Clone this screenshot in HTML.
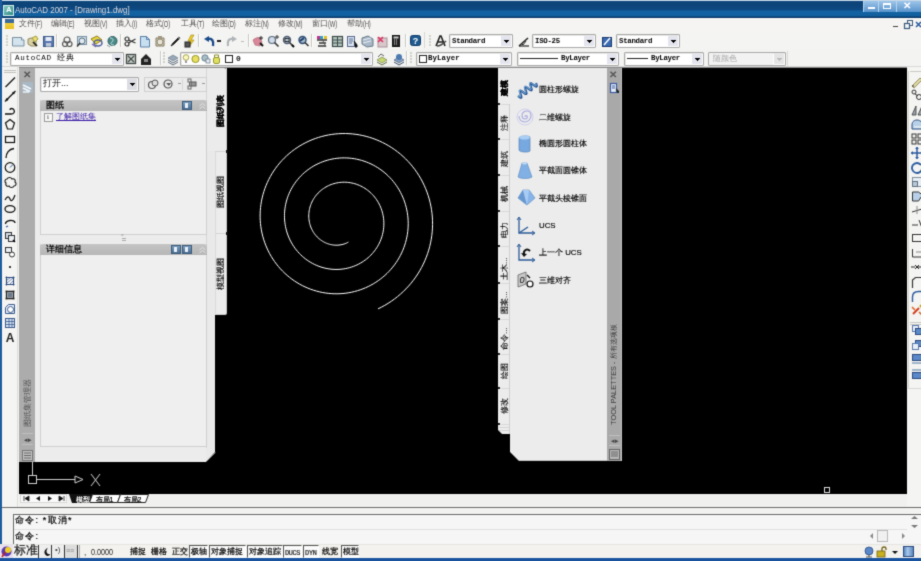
<!DOCTYPE html>
<html><head><meta charset="utf-8"><title>AutoCAD 2007</title><style>
*{margin:0;padding:0;box-sizing:border-box}
html,body{width:921px;height:561px;overflow:hidden;background:#f2f2f0;font-family:"Liberation Sans",sans-serif;position:relative}
.a{position:absolute}
.t{white-space:nowrap;line-height:1}
.m{font-family:"Liberation Mono",monospace}
.s{font-family:"Liberation Serif",serif}
svg{position:absolute;overflow:visible}
</style></head><body><div id="root" style="position:absolute;left:0;top:0;width:921px;height:561px;overflow:hidden;filter:url(#bl)"><svg width="0" height="0" style="position:absolute"><filter id="bl" x="0" y="0" width="100%" height="100%" color-interpolation-filters="sRGB"><feConvolveMatrix order="3" kernelMatrix="1 5.0 1 5.0 25.0 5.0 1 5.0 1" divisor="49.0" edgeMode="duplicate" preserveAlpha="true"/></filter></svg>
<div class="a" style="left:0px;top:0px;width:921px;height:18px;background:linear-gradient(#c8d8e8 0,#c8d8e8 1px,#0e477c 1px,#0c4478 5px,#0e4a84 10px,#1262a2 11px,#1260a0 16px,#0a3868 17px,#0a3868 18px)"></div>
<div class="a" style="left:0px;top:18px;width:921px;height:1px;background:#e0ebf4"></div>
<div class="a" style="left:3px;top:5px;width:11px;height:11px;background:linear-gradient(135deg,#7fc8c0,#2f8c86);border:1px solid #d8f0ec"></div>
<div class="a t" style="left:6px;top:6px;font-size:8px;color:#fff;font-weight:bold">A</div>
<div class="a t" style="left:15px;top:5px;font-size:9.5px;color:#d8e0ea;transform:scaleX(0.835);transform-origin:0 0;text-shadow:0 0 1px #0a2a55">AutoCAD 2007 - [Drawing1.dwg]</div>
<div class="a" style="left:863px;top:1px;width:15px;height:11px;background:linear-gradient(#9cc4e8,#5a94cc);border-left:1px solid #b8d4ec"></div>
<div class="a" style="left:878px;top:1px;width:18px;height:11px;background:linear-gradient(#9cc4e8,#5a94cc);border-left:1px solid #b8d4ec"></div>
<div class="a" style="left:896px;top:1px;width:25px;height:11px;background:linear-gradient(#9cc4e8,#5a94cc);border-left:1px solid #b8d4ec"></div>
<div class="a" style="left:868px;top:7px;width:7px;height:2px;background:#fff"></div>
<div class="a" style="left:883px;top:3px;width:8px;height:6px;border:1px solid #fff;border-top-width:2px"></div>
<div class="a t" style="left:903px;top:1px;font-size:10px;color:#fff;font-weight:bold">✕</div>
<div class="a" style="left:0px;top:0px;width:2px;height:544px;background:#1d5c9e"></div>
<div class="a" style="left:2px;top:18px;width:919px;height:14px;background:#f5f4f2"></div>
<div class="a" style="left:5px;top:19px;width:9px;height:10px;background:linear-gradient(#3a6a9a 0,#3a6a9a 40%,#f0d040 40%,#e8c020 100%)"></div>
<div class="a t" style="left:19px;top:20px;font-size:8px;color:#505050">文件<span style="font-size:9.5px;letter-spacing:-0.3px;display:inline-block;transform:scaleX(0.62);transform-origin:0 0;vertical-align:top;margin-top:-1px">(F)</span></div>
<div class="a t" style="left:51px;top:20px;font-size:8px;color:#505050">编辑<span style="font-size:9.5px;letter-spacing:-0.3px;display:inline-block;transform:scaleX(0.62);transform-origin:0 0;vertical-align:top;margin-top:-1px">(E)</span></div>
<div class="a t" style="left:84px;top:20px;font-size:8px;color:#505050">视图<span style="font-size:9.5px;letter-spacing:-0.3px;display:inline-block;transform:scaleX(0.62);transform-origin:0 0;vertical-align:top;margin-top:-1px">(V)</span></div>
<div class="a t" style="left:116px;top:20px;font-size:8px;color:#505050">插入<span style="font-size:9.5px;letter-spacing:-0.3px;display:inline-block;transform:scaleX(0.62);transform-origin:0 0;vertical-align:top;margin-top:-1px">(I)</span></div>
<div class="a t" style="left:146px;top:20px;font-size:8px;color:#505050">格式<span style="font-size:9.5px;letter-spacing:-0.3px;display:inline-block;transform:scaleX(0.62);transform-origin:0 0;vertical-align:top;margin-top:-1px">(O)</span></div>
<div class="a t" style="left:181px;top:20px;font-size:8px;color:#505050">工具<span style="font-size:9.5px;letter-spacing:-0.3px;display:inline-block;transform:scaleX(0.62);transform-origin:0 0;vertical-align:top;margin-top:-1px">(T)</span></div>
<div class="a t" style="left:212px;top:20px;font-size:8px;color:#505050">绘图<span style="font-size:9.5px;letter-spacing:-0.3px;display:inline-block;transform:scaleX(0.62);transform-origin:0 0;vertical-align:top;margin-top:-1px">(D)</span></div>
<div class="a t" style="left:245px;top:20px;font-size:8px;color:#505050">标注<span style="font-size:9.5px;letter-spacing:-0.3px;display:inline-block;transform:scaleX(0.62);transform-origin:0 0;vertical-align:top;margin-top:-1px">(N)</span></div>
<div class="a t" style="left:278px;top:20px;font-size:8px;color:#505050">修改<span style="font-size:9.5px;letter-spacing:-0.3px;display:inline-block;transform:scaleX(0.62);transform-origin:0 0;vertical-align:top;margin-top:-1px">(M)</span></div>
<div class="a t" style="left:312px;top:20px;font-size:8px;color:#505050">窗口<span style="font-size:9.5px;letter-spacing:-0.3px;display:inline-block;transform:scaleX(0.62);transform-origin:0 0;vertical-align:top;margin-top:-1px">(W)</span></div>
<div class="a t" style="left:347px;top:20px;font-size:8px;color:#505050">帮助<span style="font-size:9.5px;letter-spacing:-0.3px;display:inline-block;transform:scaleX(0.62);transform-origin:0 0;vertical-align:top;margin-top:-1px">(H)</span></div>
<div class="a" style="left:893px;top:26px;width:5px;height:1px;background:#444"></div>
<svg style="left:904px;top:20px;" width="9" height="9" viewBox="0 0 9 9"><rect x="3.5" y=".5" width="5" height="5" fill="none" stroke="#3a5a80"/><rect x=".5" y="3.5" width="5" height="5" fill="#f4f4f2" stroke="#3a5a80" stroke-width="1.2"/></svg>
<svg style="left:915px;top:21px;" width="7" height="7" viewBox="0 0 7 7"><path d="M1 1l5 5M6 1l-5 5" stroke="#2a5aa0" stroke-width="1.5"/></svg>
<div class="a" style="left:2px;top:32px;width:919px;height:17px;background:#f4f4f2"></div>
<div class="a" style="left:2px;top:49px;width:919px;height:19px;background:#f3f3f1"></div>
<div class="a" style="left:2px;top:66px;width:919px;height:1px;background:#d8d8d6"></div>
<div class="a" style="left:19px;top:67px;width:888px;height:1px;background:#8a8a8a"></div>
<svg style="left:12px;top:35px;" width="12" height="12" viewBox="0 0 12 12"><path d="M0.5 2.5h9l2.5 2.5v6h-11.5z" fill="#d4e4ee" stroke="#7890a0"/><path d="M9.5 2.5v2.5h2.5" fill="#fff" stroke="#7890a0"/></svg>
<svg style="left:27px;top:35px;" width="12" height="12" viewBox="0 0 12 12"><path d="M1 4l3-1 5 1v7h-5l-3-2z" fill="#d8d0a0" stroke="#908860"/><path d="M5 3l4-2 2 3-3 3z" fill="#e8e070" stroke="#a09840"/><path d="M6 7l4 4" stroke="#111" stroke-width="1.6"/></svg>
<svg style="left:42px;top:35px;" width="12" height="12" viewBox="0 0 12 12"><rect x="1.5" y="1.5" width="10" height="10" fill="#5878b0" stroke="#3a5888"/><rect x="3.5" y="2" width="6" height="4" fill="#e8ecf4"/><rect x="4" y="8" width="5" height="3.5" fill="#c0c8d8"/></svg>
<svg style="left:61px;top:35px;" width="12" height="12" viewBox="0 0 12 12"><circle cx="6" cy="5" r="3" fill="none" stroke="#555" stroke-width="1.2"/><circle cx="4" cy="9" r="2.5" fill="none" stroke="#555" stroke-width="1.2"/><circle cx="8.5" cy="9" r="2.5" fill="none" stroke="#555" stroke-width="1.2"/></svg>
<svg style="left:76px;top:35px;" width="12" height="12" viewBox="0 0 12 12"><rect x="1.5" y="1.5" width="9" height="8" fill="#c8dce8" stroke="#7890a0"/><circle cx="6" cy="6" r="3" fill="#dfeaf2" stroke="#607080"/><path d="M4 8l-3 3.5" stroke="#333" stroke-width="1.5"/></svg>
<svg style="left:90px;top:35px;" width="12" height="12" viewBox="0 0 12 12"><path d="M1 4l6-3 5 4-6 4z" fill="#e8d838" stroke="#907820"/><ellipse cx="8" cy="8" rx="4" ry="3" fill="none" stroke="#5060a0" stroke-width="1.5"/><path d="M2 9l4 3" stroke="#8070b0" stroke-width="1.5"/></svg>
<svg style="left:106px;top:35px;" width="12" height="12" viewBox="0 0 12 12"><circle cx="6.5" cy="6" r="4.5" fill="#4a8a88" stroke="#2a5a60"/><path d="M4 3c3 0 4 2 2 4s-1 3 2 3" stroke="#c8e8e0" fill="none"/><path d="M1 10l3 2" stroke="#8898a8"/></svg>
<svg style="left:124px;top:35px;" width="12" height="12" viewBox="0 0 12 12"><circle cx="3" cy="4" r="2" fill="none" stroke="#333" stroke-width="1.2"/><circle cx="3" cy="9" r="2" fill="none" stroke="#333" stroke-width="1.2"/><path d="M4.5 5l7 3M4.5 8l7-4" stroke="#333" stroke-width="1.2"/></svg>
<svg style="left:139px;top:35px;" width="12" height="12" viewBox="0 0 12 12"><path d="M1.5 1.5h6l3 3v7.5h-9z" fill="#c8dff0" stroke="#5a80a8"/><path d="M1.5 1.5h6v3h3" fill="none" stroke="#5a80a8"/></svg>
<svg style="left:154px;top:35px;" width="12" height="12" viewBox="0 0 12 12"><path d="M2 3h8v8h-8z" fill="#d8d0b8" stroke="#807860" rx="2"/><circle cx="6" cy="7" r="3" fill="#e8e4d8" stroke="#908870"/><rect x="4" y="1" width="4" height="3" fill="#a09880"/></svg>
<svg style="left:169px;top:35px;" width="12" height="12" viewBox="0 0 12 12"><path d="M2 11l2-3 6-6 1 1-6 6z" fill="#222" stroke="#222"/><path d="M9 2l2 2" stroke="#888" stroke-width="1.5"/></svg>
<svg style="left:184px;top:35px;" width="12" height="12" viewBox="0 0 12 12"><path d="M7 0l-3 6h3l-2 6 5-7h-3l3-5z" fill="#f0d020" stroke="#a08010" stroke-width=".6"/><rect x="1" y="7" width="5" height="5" fill="#555" stroke="#222"/></svg>
<svg style="left:203px;top:35px;" width="12" height="12" viewBox="0 0 12 12"><path d="M10 11c1-5-1-8-5-7" fill="none" stroke="#1a4a8a" stroke-width="2.4"/><path d="M1 4l5-3v6z" fill="#1a4a8a"/></svg>
<svg style="left:226px;top:35px;" width="12" height="12" viewBox="0 0 12 12"><path d="M2 11c-1-5 1-8 5-7" fill="none" stroke="#b0b4b8" stroke-width="2.2"/><path d="M11 4l-5-3v6z" fill="#b0b4b8"/></svg>
<svg style="left:252px;top:35px;" width="12" height="12" viewBox="0 0 12 12"><path d="M1 5c2-2 5-3 7-2l2 4-2 4-5-1z" fill="#d88898" stroke="#a86070" stroke-width=".6"/><path d="M8 8l3 3" stroke="#111" stroke-width="2"/><path d="M9 1v4M7 3h4" stroke="#222"/></svg>
<svg style="left:267px;top:35px;" width="12" height="12" viewBox="0 0 12 12"><circle cx="5" cy="5" r="3.5" fill="#d0dce8" stroke="#5a6a80" stroke-width="1.2"/><path d="M7.5 7.5l4 4" stroke="#333" stroke-width="1.6"/><path d="M10 0v4M8 2h4" stroke="#333"/></svg>
<svg style="left:282px;top:35px;" width="12" height="12" viewBox="0 0 12 12"><circle cx="5" cy="5" r="3.5" fill="#b8c8d8" stroke="#4a5a70" stroke-width="1.4"/><rect x="3" y="3.5" width="4" height="3" fill="none" stroke="#333"/><path d="M7.5 7.5l3 3" stroke="#333" stroke-width="1.6"/><path d="M10 10l2 2" stroke="#000" stroke-width="2"/></svg>
<svg style="left:297px;top:35px;" width="12" height="12" viewBox="0 0 12 12"><circle cx="5.5" cy="5" r="3.5" fill="#a8bccc" stroke="#2a4a70" stroke-width="1.4"/><path d="M3 6l4-3" stroke="#1a3a6a" stroke-width="2"/><path d="M8 7.5l3.5 3.5" stroke="#333" stroke-width="1.6"/></svg>
<svg style="left:316px;top:35px;" width="12" height="12" viewBox="0 0 12 12"><rect x="1" y="1" width="3" height="3" fill="#c03090"/><rect x="4" y="1" width="3" height="3" fill="#30a0c0"/><rect x="8" y="1" width="3" height="3" fill="#e0c020"/><path d="M1 5h10M3 8h7M2 11h8" stroke="#333" stroke-width="1.5"/><path d="M6 4l4 8" stroke="#555"/></svg>
<svg style="left:331px;top:35px;" width="12" height="12" viewBox="0 0 12 12"><rect x="1.5" y="1.5" width="10" height="10" fill="#b8c8c0" stroke="#3a4a48" stroke-width="1.2"/><path d="M6.5 2v9M2 5h9M2 8h9" stroke="#3a4a48"/></svg>
<svg style="left:346px;top:35px;" width="12" height="12" viewBox="0 0 12 12"><rect x="1.5" y="1.5" width="7" height="10" fill="#d8e4f0" stroke="#5a6a90"/><path d="M3 4h4M3 6h4M3 8h3" stroke="#5a6a90"/><path d="M8 6l3 4v2h-2" fill="#111" stroke="#111"/></svg>
<svg style="left:361px;top:35px;" width="12" height="12" viewBox="0 0 12 12"><path d="M1 3l6-2 5 3v7l-6 1-5-3z" fill="#a8b8c8" stroke="#6a7a8a"/><path d="M2 5l8-2M2 8l8-2" stroke="#e8eef4"/></svg>
<svg style="left:376px;top:35px;" width="12" height="12" viewBox="0 0 12 12"><rect x="2" y="3" width="9" height="9" fill="#d8c8cc" stroke="#a89098"/><path d="M2 2l5 5M7 2l-5 5" stroke="#e03060" stroke-width="1.6"/></svg>
<svg style="left:390px;top:35px;" width="12" height="12" viewBox="0 0 12 12"><rect x="2.5" y="0.5" width="7" height="11" fill="#222" stroke="#111"/><rect x="3.5" y="1.5" width="5" height="2" fill="#ccc"/><path d="M4 5h1M6 5h1M4 7h1M6 7h1M4 9h1M6 9h1" stroke="#ddd"/></svg>
<svg style="left:410px;top:35px;" width="12" height="12" viewBox="0 0 12 12"><rect x="0.5" y="0.5" width="10" height="10" rx="2" fill="#1f5a90" stroke="#0f3a6a"/><text x="5.5" y="9" font-size="9" font-weight="bold" fill="#fff" text-anchor="middle" font-family="Liberation Sans">?</text></svg>
<div class="a" style="left:56px;top:34px;width:1px;height:13px;background:#c8c8c4"></div>
<div class="a" style="left:57px;top:34px;width:1px;height:13px;background:#ffffff"></div>
<div class="a" style="left:120px;top:34px;width:1px;height:13px;background:#c8c8c4"></div>
<div class="a" style="left:121px;top:34px;width:1px;height:13px;background:#ffffff"></div>
<div class="a" style="left:198px;top:34px;width:1px;height:13px;background:#c8c8c4"></div>
<div class="a" style="left:199px;top:34px;width:1px;height:13px;background:#ffffff"></div>
<div class="a" style="left:248px;top:34px;width:1px;height:13px;background:#c8c8c4"></div>
<div class="a" style="left:249px;top:34px;width:1px;height:13px;background:#ffffff"></div>
<div class="a" style="left:311px;top:34px;width:1px;height:13px;background:#c8c8c4"></div>
<div class="a" style="left:312px;top:34px;width:1px;height:13px;background:#ffffff"></div>
<div class="a" style="left:405px;top:34px;width:1px;height:13px;background:#c8c8c4"></div>
<div class="a" style="left:406px;top:34px;width:1px;height:13px;background:#ffffff"></div>
<div class="a" style="left:6px;top:35px;width:2px;height:2px;background:#d0d0cc"></div>
<div class="a" style="left:6px;top:38px;width:2px;height:2px;background:#d0d0cc"></div>
<div class="a" style="left:6px;top:41px;width:2px;height:2px;background:#d0d0cc"></div>
<div class="a" style="left:6px;top:44px;width:2px;height:2px;background:#d0d0cc"></div>
<div class="a" style="left:217px;top:40px;width:4px;height:2px;background:#222"></div>
<div class="a" style="left:241px;top:41px;width:3px;height:1px;background:#bbb"></div>
<div class="a" style="left:424px;top:32px;width:1px;height:16px;background:#d8d8d4"></div>
<div class="a" style="left:429px;top:35px;width:2px;height:2px;background:#d0d0cc"></div>
<div class="a" style="left:429px;top:38px;width:2px;height:2px;background:#d0d0cc"></div>
<div class="a" style="left:429px;top:41px;width:2px;height:2px;background:#d0d0cc"></div>
<div class="a" style="left:429px;top:44px;width:2px;height:2px;background:#d0d0cc"></div>
<svg style="left:435px;top:35px;" width="12" height="12" viewBox="0 0 12 12"><path d="M1 11l4-10h1l4 10M3 7h5" fill="none" stroke="#222" stroke-width="1.6"/><path d="M2 11c3 0 6-2 9-5" stroke="#444" stroke-width="1.4" fill="none"/></svg>
<svg style="left:518px;top:35px;" width="12" height="12" viewBox="0 0 12 12"><path d="M1 11l9-8" stroke="#222" stroke-width="1.5"/><path d="M1 11h10" stroke="#222" stroke-width="1.2"/><path d="M3 8l2 2 3-4" stroke="#333" fill="none"/></svg>
<svg style="left:601px;top:35px;" width="12" height="12" viewBox="0 0 12 12"><rect x="1.5" y="2.5" width="9" height="9" fill="#3a6ab0" stroke="#1a3a70"/><path d="M3 10l6-7" stroke="#fff" stroke-width="1.5"/></svg>
<div class="a" style="left:449px;top:34px;width:64px;height:14px;background:#fff;border:1px solid #a9a9a9;border-radius:1px;box-shadow:inset 1px 1px 0 #e8e8e8"></div>
<div class="a t" style="left:452px;top:36px;font-family:'Liberation Mono',monospace;font-size:7.4px;color:#000;font-weight:bold;letter-spacing:-0.3px;top:38px">Standard</div>
<div class="a" style="left:501px;top:36px;width:10px;height:10px;background:#e4e4ee"></div>
<div class="a" style="left:504px;top:40px;width:5px;height:1px;background:#000"></div>
<div class="a" style="left:505px;top:41px;width:3px;height:1px;background:#000"></div>
<div class="a" style="left:506px;top:42px;width:1px;height:1px;background:#000"></div>
<div class="a" style="left:532px;top:34px;width:64px;height:14px;background:#fff;border:1px solid #a9a9a9;border-radius:1px;box-shadow:inset 1px 1px 0 #e8e8e8"></div>
<div class="a t" style="left:535px;top:36px;font-family:'Liberation Mono',monospace;font-size:7.4px;color:#000;font-weight:bold;letter-spacing:-0.3px;top:38px">ISO-25</div>
<div class="a" style="left:584px;top:36px;width:10px;height:10px;background:#e4e4ee"></div>
<div class="a" style="left:587px;top:40px;width:5px;height:1px;background:#000"></div>
<div class="a" style="left:588px;top:41px;width:3px;height:1px;background:#000"></div>
<div class="a" style="left:589px;top:42px;width:1px;height:1px;background:#000"></div>
<div class="a" style="left:616px;top:34px;width:64px;height:14px;background:#fff;border:1px solid #a9a9a9;border-radius:1px;box-shadow:inset 1px 1px 0 #e8e8e8"></div>
<div class="a t" style="left:619px;top:36px;font-family:'Liberation Mono',monospace;font-size:7.4px;color:#000;font-weight:bold;letter-spacing:-0.3px;top:38px">Standard</div>
<div class="a" style="left:668px;top:36px;width:10px;height:10px;background:#e4e4ee"></div>
<div class="a" style="left:671px;top:40px;width:5px;height:1px;background:#000"></div>
<div class="a" style="left:672px;top:41px;width:3px;height:1px;background:#000"></div>
<div class="a" style="left:673px;top:42px;width:1px;height:1px;background:#000"></div>
<div class="a" style="left:6px;top:52px;width:2px;height:2px;background:#d0d0cc"></div>
<div class="a" style="left:6px;top:55px;width:2px;height:2px;background:#d0d0cc"></div>
<div class="a" style="left:6px;top:58px;width:2px;height:2px;background:#d0d0cc"></div>
<div class="a" style="left:6px;top:61px;width:2px;height:2px;background:#d0d0cc"></div>
<div class="a" style="left:10px;top:52px;width:114px;height:14px;background:#fff;border:1px solid #a9a9a9;border-radius:1px;box-shadow:inset 1px 1px 0 #e8e8e8"></div>
<div class="a t" style="left:15px;top:54px;font-family:'Liberation Mono',monospace;font-size:7.4px;color:#000;font-weight:bold;letter-spacing:-0.3px;top:55px;letter-spacing:0.7px;font-weight:normal;font-size:7.6px">AutoCAD 经典</div>
<div class="a" style="left:112px;top:54px;width:10px;height:10px;background:#e4e4ee"></div>
<div class="a" style="left:115px;top:58px;width:5px;height:1px;background:#000"></div>
<div class="a" style="left:116px;top:59px;width:3px;height:1px;background:#000"></div>
<div class="a" style="left:117px;top:60px;width:1px;height:1px;background:#000"></div>
<svg style="left:125px;top:53px;" width="12" height="12" viewBox="0 0 12 12"><rect x="1.5" y="1.5" width="9" height="9" fill="#c8d0c8" stroke="#404848" stroke-width="1.3"/><path d="M3 3l6 6M9 3l-6 6" stroke="#404848" stroke-width="1.2"/></svg>
<svg style="left:140px;top:53px;" width="12" height="12" viewBox="0 0 12 12"><path d="M1 6l5-5 5 5v6h-10z" fill="#222"/><rect x="4" y="6" width="4" height="3" fill="#888"/></svg>
<div class="a" style="left:160px;top:51px;width:1px;height:14px;background:#c8c8c4"></div>
<div class="a" style="left:161px;top:51px;width:1px;height:14px;background:#ffffff"></div>
<div class="a" style="left:163px;top:52px;width:2px;height:2px;background:#d0d0cc"></div>
<div class="a" style="left:163px;top:55px;width:2px;height:2px;background:#d0d0cc"></div>
<div class="a" style="left:163px;top:58px;width:2px;height:2px;background:#d0d0cc"></div>
<div class="a" style="left:163px;top:61px;width:2px;height:2px;background:#d0d0cc"></div>
<svg style="left:167px;top:53px;" width="12" height="12" viewBox="0 0 12 12"><path d="M1 5l5-3 5 3-5 3z" fill="#98a8b8" stroke="#607080" stroke-width=".6"/><path d="M1 7l5 3 5-3M1 9l5 3 5-3" fill="none" stroke="#607080"/></svg>
<div class="a" style="left:180px;top:52px;width:193px;height:14px;background:#fff;border:1px solid #a9a9a9;border-radius:1px;box-shadow:inset 1px 1px 0 #e8e8e8"></div>
<div class="a" style="left:361px;top:54px;width:10px;height:10px;background:#e4e4ee"></div>
<div class="a" style="left:364px;top:58px;width:5px;height:1px;background:#000"></div>
<div class="a" style="left:365px;top:59px;width:3px;height:1px;background:#000"></div>
<div class="a" style="left:366px;top:60px;width:1px;height:1px;background:#000"></div>
<svg style="left:182px;top:53px;" width="12" height="12" viewBox="0 0 12 12"><circle cx="4" cy="4.5" r="2.8" fill="#fbf8c0" stroke="#a09840" stroke-width=".9"/><rect x="3" y="7.5" width="2" height="2.5" fill="#999"/></svg>
<svg style="left:191px;top:53px;" width="12" height="12" viewBox="0 0 12 12"><circle cx="4.5" cy="6" r="3.6" fill="#e8e060" stroke="#8a8a20" stroke-width=".9"/></svg>
<svg style="left:201px;top:53px;" width="12" height="12" viewBox="0 0 12 12"><circle cx="4" cy="5" r="3.2" fill="#a8c0c8" stroke="#5a7080" stroke-width=".8"/><rect x="5" y="6" width="4" height="4" fill="#e8eef4" stroke="#607080" stroke-width=".7"/></svg>
<svg style="left:212px;top:53px;" width="12" height="12" viewBox="0 0 12 12"><rect x="1.5" y="4.5" width="6" height="6" rx="1.5" fill="#e0e060" stroke="#808010" stroke-width=".8"/><path d="M2.5 4.5v-2.5h4v2.5" fill="none" stroke="#808010" stroke-width=".9"/></svg>
<div class="a" style="left:225px;top:55px;width:8px;height:8px;border:1px solid #222;background:#fff"></div>
<div class="a t" style="left:236px;top:55px;font-size:8px;color:#111;font-family:'Liberation Mono',monospace;font-weight:bold">0</div>
<svg style="left:376px;top:53px;" width="12" height="12" viewBox="0 0 12 12"><path d="M1 7l5-3 5 3-5 3z" fill="#c8d870" stroke="#607040" stroke-width=".6"/><path d="M2 4l3-3 3 2" stroke="#606060" fill="none"/><path d="M1 9l5 3 5-3" fill="none" stroke="#607040"/></svg>
<svg style="left:393px;top:53px;" width="12" height="12" viewBox="0 0 12 12"><path d="M1 7l5-3 5 3-5 3z" fill="#88a0c0" stroke="#405070" stroke-width=".6"/><circle cx="6" cy="4" r="3" fill="#4a7ab0"/><path d="M1 9l5 3 5-3" fill="none" stroke="#405070"/></svg>
<div class="a" style="left:406px;top:51px;width:1px;height:14px;background:#c8c8c4"></div>
<div class="a" style="left:407px;top:51px;width:1px;height:14px;background:#ffffff"></div>
<div class="a" style="left:410px;top:52px;width:2px;height:2px;background:#d0d0cc"></div>
<div class="a" style="left:410px;top:55px;width:2px;height:2px;background:#d0d0cc"></div>
<div class="a" style="left:410px;top:58px;width:2px;height:2px;background:#d0d0cc"></div>
<div class="a" style="left:410px;top:61px;width:2px;height:2px;background:#d0d0cc"></div>
<div class="a" style="left:416px;top:52px;width:96px;height:14px;background:#fff;border:1px solid #a9a9a9;border-radius:1px;box-shadow:inset 1px 1px 0 #e8e8e8"></div>
<div class="a t" style="left:428px;top:54px;font-family:'Liberation Mono',monospace;font-size:7.4px;color:#000;font-weight:bold;letter-spacing:-0.3px;top:55px;letter-spacing:0.1px">ByLayer</div>
<div class="a" style="left:500px;top:54px;width:10px;height:10px;background:#e4e4ee"></div>
<div class="a" style="left:503px;top:58px;width:5px;height:1px;background:#000"></div>
<div class="a" style="left:504px;top:59px;width:3px;height:1px;background:#000"></div>
<div class="a" style="left:505px;top:60px;width:1px;height:1px;background:#000"></div>
<div class="a" style="left:419px;top:55px;width:8px;height:8px;border:1px solid #222;background:#fff"></div>
<div class="a" style="left:517px;top:52px;width:102px;height:14px;background:#fff;border:1px solid #a9a9a9;border-radius:1px;box-shadow:inset 1px 1px 0 #e8e8e8"></div>
<div class="a t" style="left:561px;top:54px;font-family:'Liberation Mono',monospace;font-size:7.4px;color:#000;font-weight:bold;letter-spacing:-0.3px;top:55px">ByLayer</div>
<div class="a" style="left:607px;top:54px;width:10px;height:10px;background:#e4e4ee"></div>
<div class="a" style="left:610px;top:58px;width:5px;height:1px;background:#000"></div>
<div class="a" style="left:611px;top:59px;width:3px;height:1px;background:#000"></div>
<div class="a" style="left:612px;top:60px;width:1px;height:1px;background:#000"></div>
<div class="a" style="left:520px;top:58px;width:38px;height:1px;background:#222"></div>
<div class="a" style="left:624px;top:52px;width:80px;height:14px;background:#fff;border:1px solid #a9a9a9;border-radius:1px;box-shadow:inset 1px 1px 0 #e8e8e8"></div>
<div class="a t" style="left:651px;top:54px;font-family:'Liberation Mono',monospace;font-size:7.4px;color:#000;font-weight:bold;letter-spacing:-0.3px;top:55px">ByLayer</div>
<div class="a" style="left:692px;top:54px;width:10px;height:10px;background:#e4e4ee"></div>
<div class="a" style="left:695px;top:58px;width:5px;height:1px;background:#000"></div>
<div class="a" style="left:696px;top:59px;width:3px;height:1px;background:#000"></div>
<div class="a" style="left:697px;top:60px;width:1px;height:1px;background:#000"></div>
<div class="a" style="left:627px;top:58px;width:21px;height:1px;background:#222"></div>
<div class="a" style="left:708px;top:52px;width:78px;height:14px;background:#fff;border:1px solid #a9a9a9;border-radius:1px;box-shadow:inset 1px 1px 0 #e8e8e8"></div>
<div class="a t" style="left:713px;top:54px;font-size:8px;color:#a8a8a8;top:55px">随颜色</div>
<div class="a" style="left:774px;top:54px;width:10px;height:10px;background:#e4e4e4"></div>
<div class="a" style="left:777px;top:58px;width:5px;height:1px;background:#b8b8b8"></div>
<div class="a" style="left:778px;top:59px;width:3px;height:1px;background:#b8b8b8"></div>
<div class="a" style="left:779px;top:60px;width:1px;height:1px;background:#b8b8b8"></div>
<div class="a" style="left:709px;top:53px;width:64px;height:12px;background:#f2f2f2"></div>
<div class="a t" style="left:713px;top:55px;font-size:8px;color:#a8a8a8;">随颜色</div>
<div class="a" style="left:787px;top:51px;width:1px;height:15px;background:#d8d8d4"></div>
<div class="a" style="left:19px;top:68px;width:888px;height:426px;background:#000"></div>
<svg style="left:19px;top:68px;" width="888" height="426" viewBox="0 0 888 426"><polyline points="329.42,174.09 328.57,174.55 327.70,174.97 326.80,175.36 325.88,175.72 324.94,176.04 323.98,176.32 323.01,176.56 322.02,176.77 321.02,176.93 320.00,177.06 318.98,177.14 317.94,177.19 316.90,177.19 315.86,177.15 314.81,177.06 313.76,176.93 312.71,176.76 311.66,176.54 310.61,176.28 309.57,175.98 308.54,175.63 307.52,175.23 306.50,174.80 305.51,174.32 304.52,173.79 303.56,173.22 302.61,172.62 301.68,171.96 300.77,171.27 299.89,170.54 299.04,169.77 298.21,168.96 297.41,168.11 296.65,167.23 295.91,166.31 295.21,165.36 294.55,164.37 293.92,163.36 293.34,162.31 292.79,161.23 292.28,160.13 291.82,159.00 291.40,157.85 291.03,156.68 290.70,155.48 290.42,154.27 290.19,153.04 290.01,151.80 289.88,150.54 289.79,149.28 289.76,148.00 289.79,146.72 289.86,145.44 289.99,144.15 290.17,142.86 290.40,141.58 290.68,140.30 291.02,139.03 291.42,137.76 291.86,136.51 292.36,135.27 292.91,134.04 293.51,132.84 294.17,131.65 294.87,130.49 295.62,129.35 296.43,128.23 297.28,127.15 298.18,126.09 299.12,125.07 300.11,124.08 301.15,123.13 302.22,122.22 303.34,121.35 304.50,120.52 305.69,119.74 306.92,119.00 308.19,118.31 309.48,117.67 310.81,117.07 312.17,116.53 313.55,116.05 314.96,115.61 316.39,115.24 317.84,114.92 319.30,114.66 320.79,114.45 322.28,114.31 323.79,114.23 325.31,114.20 326.83,114.24 328.35,114.34 329.88,114.50 331.40,114.73 332.92,115.02 334.43,115.37 335.94,115.78 337.43,116.25 338.90,116.79 340.36,117.39 341.80,118.05 343.22,118.77 344.61,119.55 345.98,120.38 347.31,121.28 348.62,122.23 349.88,123.24 351.12,124.30 352.31,125.42 353.46,126.59 354.57,127.81 355.63,129.07 356.64,130.38 357.60,131.74 358.51,133.14 359.37,134.58 360.17,136.06 360.91,137.58 361.59,139.13 362.21,140.71 362.77,142.33 363.27,143.97 363.70,145.63 364.07,147.32 364.37,149.02 364.60,150.74 364.76,152.48 364.85,154.23 364.87,155.99 364.82,157.75 364.70,159.51 364.50,161.28 364.24,163.04 363.90,164.79 363.49,166.54 363.01,168.28 362.46,170.00 361.83,171.70 361.14,173.38 360.38,175.04 359.55,176.67 358.65,178.27 357.68,179.84 356.64,181.37 355.55,182.87 354.39,184.32 353.16,185.73 351.88,187.10 350.54,188.42 349.14,189.69 347.69,190.90 346.18,192.06 344.63,193.16 343.02,194.20 341.38,195.18 339.68,196.09 337.95,196.94 336.18,197.72 334.37,198.42 332.53,199.06 330.66,199.63 328.76,200.12 326.83,200.54 324.89,200.87 322.93,201.14 320.95,201.32 318.96,201.42 316.96,201.45 314.96,201.39 312.96,201.25 310.95,201.03 308.95,200.73 306.96,200.35 304.98,199.89 303.01,199.34 301.06,198.72 299.13,198.01 297.22,197.23 295.35,196.37 293.50,195.42 291.69,194.41 289.91,193.32 288.18,192.15 286.48,190.91 284.84,189.60 283.24,188.22 281.70,186.78 280.21,185.26 278.78,183.69 277.41,182.05 276.10,180.36 274.86,178.61 273.68,176.80 272.58,174.95 271.55,173.05 270.59,171.10 269.71,169.10 268.91,167.07 268.18,165.01 267.54,162.90 266.99,160.77 266.52,158.62 266.13,156.43 265.83,154.23 265.62,152.02 265.50,149.79 265.47,147.55 265.53,145.30 265.68,143.05 265.92,140.81 266.25,138.57 266.67,136.34 267.18,134.12 267.78,131.92 268.48,129.73 269.26,127.58 270.13,125.45 271.09,123.35 272.13,121.28 273.26,119.25 274.47,117.27 275.77,115.33 277.14,113.44 278.60,111.60 280.13,109.81 281.73,108.09 283.41,106.42 285.16,104.82 286.98,103.29 288.86,101.83 290.80,100.44 292.80,99.13 294.86,97.89 296.97,96.74 299.14,95.66 301.35,94.68 303.60,93.78 305.89,92.97 308.22,92.25 310.58,91.62 312.98,91.09 315.39,90.66 317.83,90.31 320.29,90.07 322.76,89.93 325.24,89.88 327.73,89.94 330.22,90.09 332.70,90.35 335.19,90.70 337.66,91.16 340.11,91.72 342.55,92.37 344.97,93.13 347.36,93.98 349.71,94.93 352.04,95.98 354.32,97.12 356.57,98.36 358.77,99.69 360.91,101.11 363.01,102.62 365.04,104.21 367.02,105.89 368.93,107.65 370.77,109.49 372.55,111.41 374.25,113.40 375.87,115.47 377.41,117.60 378.86,119.80 380.23,122.06 381.51,124.38 382.70,126.75 383.80,129.17 384.80,131.65 385.70,134.16 386.51,136.72 387.21,139.31 387.81,141.94 388.30,144.59 388.69,147.27 388.97,149.96 389.14,152.68 389.21,155.40 389.16,158.13 389.00,160.86 388.74,163.59 388.36,166.31 387.88,169.02 387.28,171.72 386.58,174.39 385.77,177.04 384.84,179.66 383.82,182.25 382.68,184.80 381.45,187.31 380.11,189.78 378.67,192.19 377.13,194.55 375.49,196.85 373.76,199.08 371.93,201.25 370.02,203.36 368.02,205.38 365.94,207.33 363.77,209.20 361.53,210.98 359.21,212.67 356.82,214.28 354.36,215.79 351.84,217.20 349.26,218.52 346.62,219.73 343.93,220.84 341.19,221.84 338.41,222.73 335.59,223.51 332.73,224.18 329.84,224.74 326.93,225.18 323.99,225.50 321.04,225.71 318.08,225.79 315.11,225.76 312.13,225.61 309.16,225.34 306.20,224.95 303.24,224.44 300.31,223.81 297.39,223.06 294.51,222.20 291.65,221.21 288.83,220.12 286.05,218.90 283.31,217.58 280.63,216.14 278.00,214.59 275.43,212.93 272.92,211.17 270.48,209.31 268.11,207.34 265.82,205.28 263.60,203.13 261.48,200.88 259.44,198.54 257.49,196.12 255.63,193.62 253.88,191.04 252.22,188.39 250.67,185.67 249.23,182.88 247.90,180.03 246.68,177.12 245.57,174.16 244.59,171.16 243.72,168.11 242.98,165.02 242.35,161.90 241.86,158.75 241.48,155.58 241.24,152.39 241.12,149.18 241.13,145.97 241.28,142.75 241.55,139.54 241.95,136.33 242.47,133.14 243.13,129.96 243.92,126.80 244.83,123.68 245.87,120.59 247.04,117.53 248.33,114.52 249.74,111.56 251.27,108.65 252.92,105.80 254.69,103.01 256.57,100.29 258.56,97.64 260.66,95.07 262.87,92.59 265.18,90.18 267.58,87.87 270.08,85.65 272.68,83.53 275.36,81.52 278.13,79.60 280.97,77.80 283.89,76.11 286.88,74.54 289.94,73.08 293.06,71.74 296.24,70.53 299.46,69.45 302.74,68.49 306.06,67.66 309.41,66.97 312.79,66.41 316.20,65.98 319.64,65.69 323.08,65.54 326.54,65.53 330.00,65.66 333.45,65.92 336.90,66.33 340.34,66.87 343.76,67.55 347.16,68.37 350.52,69.32 353.85,70.42 357.14,71.64 360.39,73.00 363.58,74.50 366.71,76.12 369.79,77.87 372.79,79.74 375.73,81.74 378.58,83.85 381.36,86.08 384.04,88.43 386.64,90.89 389.14,93.45 391.54,96.11 393.83,98.88 396.02,101.74 398.09,104.69 400.05,107.72 401.88,110.84 403.60,114.03 405.18,117.29 406.64,120.62 407.96,124.02 409.15,127.46 410.21,130.96 411.12,134.51 411.89,138.09 412.52,141.71 413.00,145.36 413.34,149.03 413.53,152.71 413.57,156.41 413.47,160.11 413.21,163.81 412.81,167.51 412.26,171.19 411.56,174.85 410.71,178.49 409.72,182.10 408.58,185.67 407.29,189.19 405.87,192.67 404.30,196.10 402.59,199.46 400.75,202.76 398.78,205.99 396.67,209.14 394.43,212.21 392.07,215.19 389.59,218.08 386.99,220.87 384.28,223.56 381.45,226.14 378.52,228.62 375.49,230.97 372.36,233.21 369.14,235.32 365.83,237.31 362.44,239.16 358.97,240.88" fill="none" stroke="#ffffff" stroke-width="1"/></svg>
<svg style="left:19px;top:440px;" width="120" height="60" viewBox="0 0 120 60"><path d="M13.5 22V35.5" stroke="#d0d0d0" stroke-width="1"/><rect x="9.5" y="35.5" width="8" height="8" fill="none" stroke="#d0d0d0" stroke-width="1"/><path d="M18 39.5H56" stroke="#d0d0d0" stroke-width="1"/><path d="M56 36v7l8-3.5z" fill="none" stroke="#d0d0d0" stroke-width="1"/><path d="M72 34l9 12M81 34l-9 12" stroke="#d0d0d0" stroke-width="1"/></svg>
<div class="a" style="left:824px;top:487px;width:6px;height:6px;border:1px solid #ddd"></div>
<div class="a" style="left:2px;top:67px;width:17px;height:440px;background:#f4f4f2"></div>
<div class="a" style="left:17px;top:67px;width:1px;height:440px;background:#dcdcd8"></div>
<div class="a" style="left:4px;top:70px;width:12px;height:1px;background:#c0c0bc"></div>
<div class="a" style="left:4px;top:72px;width:12px;height:1px;background:#c0c0bc"></div>
<svg style="left:4px;top:76px;" width="12" height="12" viewBox="0 0 12 12"><path d="M1.5 11L11 1.5" stroke="#111" stroke-width="1.3"/></svg>
<svg style="left:4px;top:90px;" width="12" height="12" viewBox="0 0 12 12"><path d="M1 11.5L11.5 1" stroke="#111" stroke-width="1.3"/><circle cx="3" cy="9.5" r="1.2" fill="#111"/><circle cx="9.5" cy="3" r="1.2" fill="#111"/></svg>
<svg style="left:4px;top:104px;" width="12" height="12" viewBox="0 0 12 12"><path d="M1 10h6c3 0 4-2 3-4s-4-2-4 0" stroke="#111" stroke-width="1.3" fill="none"/></svg>
<svg style="left:4px;top:118px;" width="12" height="12" viewBox="0 0 12 12"><path d="M6 1.5l4.5 3.5-2 6h-5l-2-6z" fill="none" stroke="#111" stroke-width="1.2"/></svg>
<svg style="left:4px;top:133px;" width="12" height="12" viewBox="0 0 12 12"><rect x="1.5" y="3.5" width="9" height="6" fill="none" stroke="#111" stroke-width="1.2"/></svg>
<svg style="left:4px;top:147px;" width="12" height="12" viewBox="0 0 12 12"><path d="M2 11C2 6 5 2 10 1.5" stroke="#111" stroke-width="1.3" fill="none"/></svg>
<svg style="left:4px;top:161px;" width="12" height="12" viewBox="0 0 12 12"><circle cx="6" cy="6.5" r="4.8" fill="none" stroke="#111" stroke-width="1.2"/><path d="M6 6.5L9 3.5" stroke="#2a5aa0"/></svg>
<svg style="left:4px;top:176px;" width="12" height="12" viewBox="0 0 12 12"><path d="M3 3c1-2 4-2 5 0 2-1 4 1 3 3 2 1 1 4-1 4-1 2-4 2-5 0-2 1-4-1-3-3-2-1-1-4 1-4z" fill="none" stroke="#111" stroke-width="1.1"/></svg>
<svg style="left:4px;top:190px;" width="12" height="12" viewBox="0 0 12 12"><path d="M1 10c2-4 4-4 5-1s3 2 5-4" stroke="#111" stroke-width="1.2" fill="none"/></svg>
<svg style="left:4px;top:203px;" width="12" height="12" viewBox="0 0 12 12"><ellipse cx="6" cy="6" rx="5" ry="3.3" fill="none" stroke="#111" stroke-width="1.3"/></svg>
<svg style="left:4px;top:217px;" width="12" height="12" viewBox="0 0 12 12"><path d="M1.5 7C1 3 11 2 11 6" stroke="#111" stroke-width="1.3" fill="none"/><path d="M4 9l-2 1" stroke="#2a5aa0" stroke-width="1.3"/></svg>
<svg style="left:4px;top:231px;" width="12" height="12" viewBox="0 0 12 12"><rect x="1.5" y="1.5" width="6" height="6" fill="#d0dce8" stroke="#333"/><rect x="4.5" y="4.5" width="6" height="6" fill="#e8eef4" stroke="#333"/><path d="M9 9l2 2" stroke="#000" stroke-width="1.5"/></svg>
<svg style="left:4px;top:246px;" width="12" height="12" viewBox="0 0 12 12"><rect x="1.5" y="1.5" width="6" height="5" fill="#e8eef4" stroke="#333"/><circle cx="8" cy="8.5" r="2.5" fill="#fff" stroke="#333"/></svg>
<svg style="left:4px;top:261px;" width="12" height="12" viewBox="0 0 12 12"><circle cx="6" cy="6" r="1.1" fill="#111"/></svg>
<svg style="left:4px;top:275px;" width="12" height="12" viewBox="0 0 12 12"><path d="M1.5 2.5h9M1.5 9.5h9M2.5 1.5v9M9.5 1.5v9" stroke="#2a4a80" stroke-width="1.1"/><path d="M3 8l6-5M3 5l3-2M6 9l3-3" stroke="#5a7ab0" stroke-width=".8"/></svg>
<svg style="left:4px;top:289px;" width="12" height="12" viewBox="0 0 12 12"><path d="M1.5 2.5h9M1.5 9.5h9M2.5 1.5v9M9.5 1.5v9" stroke="#222" stroke-width="1.3"/><rect x="3.5" y="3.5" width="5" height="5" fill="#6a7a8a"/></svg>
<svg style="left:4px;top:303px;" width="12" height="12" viewBox="0 0 12 12"><path d="M1.5 10.5v-6l3-3h6v9z" fill="#e8f0f8" stroke="#3a5a90"/><circle cx="6.5" cy="6.5" r="3" fill="#fff" stroke="#3a5a90"/></svg>
<svg style="left:4px;top:317px;" width="12" height="12" viewBox="0 0 12 12"><rect x="1.5" y="1.5" width="9" height="9" fill="#d8e6f4" stroke="#3a5a90"/><path d="M2 4.5h8M2 7.5h8M5 2v8M8 2v8" stroke="#3a5a90" stroke-width=".8"/></svg>
<svg style="left:4px;top:331px;" width="12" height="12" viewBox="0 0 12 12"><text x="6" y="11" font-size="12" font-weight="bold" fill="#222" text-anchor="middle" font-family="Liberation Sans">A</text></svg>
<div class="a" style="left:907px;top:67px;width:14px;height:440px;background:#f4f4f2"></div>
<div class="a" style="left:908px;top:71px;width:1px;height:317px;background:#d0d0cc"></div>
<div class="a" style="left:910px;top:71px;width:11px;height:1px;background:#c8c8c4"></div>
<svg style="left:911px;top:75px;" width="12" height="12" viewBox="0 0 12 12"><path d="M1 11l8-8 2 2-8 8z" fill="#e0d8a0" stroke="#807850" stroke-width=".8"/><path d="M1 11l2 0" stroke="#333"/></svg>
<svg style="left:911px;top:89px;" width="12" height="12" viewBox="0 0 12 12"><circle cx="3" cy="3" r="2" fill="none" stroke="#333"/><circle cx="8" cy="8" r="2.5" fill="none" stroke="#333"/><path d="M4 5l3 2" stroke="#333"/></svg>
<svg style="left:911px;top:104px;" width="12" height="12" viewBox="0 0 12 12"><path d="M1 11l4-9v9zM7 11l4-9v9z" fill="#a0a8b0" stroke="#333" stroke-width=".8"/></svg>
<svg style="left:911px;top:118px;" width="12" height="12" viewBox="0 0 12 12"><path d="M1 11v-4c0-4 3-5 5-5s5 1 5 5v4z" fill="#b8d0e8" stroke="#2a4a80"/><path d="M3 9h8" stroke="#fff"/></svg>
<svg style="left:911px;top:133px;" width="12" height="12" viewBox="0 0 12 12"><rect x="1" y="1" width="4" height="4" fill="none" stroke="#333"/><rect x="7" y="1" width="4" height="4" fill="none" stroke="#333"/><rect x="1" y="7" width="4" height="4" fill="none" stroke="#333"/><rect x="7" y="7" width="4" height="4" fill="none" stroke="#333"/></svg>
<svg style="left:911px;top:147px;" width="12" height="12" viewBox="0 0 12 12"><path d="M6 0v12M0 6h12" stroke="#2a5aa0" stroke-width="1.5"/><path d="M6 0l-2 2h4zM6 12l-2-2h4zM0 6l2-2v4zM12 6l-2-2v4z" fill="#2a5aa0"/></svg>
<svg style="left:911px;top:161px;" width="12" height="12" viewBox="0 0 12 12"><path d="M10 4A5 5 0 1 0 11 7" fill="none" stroke="#2a5aa0" stroke-width="1.8"/></svg>
<svg style="left:911px;top:176px;" width="12" height="12" viewBox="0 0 12 12"><rect x="1.5" y="1.5" width="9" height="9" fill="#e8eef4" stroke="#8090a0"/><rect x="1.5" y="5.5" width="5" height="5" fill="#b8c8d8" stroke="#607080"/></svg>
<svg style="left:911px;top:190px;" width="12" height="12" viewBox="0 0 12 12"><path d="M1.5 2v9h6l4-6-4-3z" fill="#b8d0e8" stroke="#333"/></svg>
<svg style="left:911px;top:204px;" width="12" height="12" viewBox="0 0 12 12"><path d="M1 8l10-3" stroke="#333"/><path d="M6 2v8" stroke="#888"/></svg>
<svg style="left:911px;top:218px;" width="12" height="12" viewBox="0 0 12 12"><path d="M1 7h6" stroke="#333"/><path d="M8 2l3 8" stroke="#333"/></svg>
<svg style="left:911px;top:232px;" width="12" height="12" viewBox="0 0 12 12"><rect x="1.5" y="2.5" width="9" height="7" fill="none" stroke="#333"/></svg>
<svg style="left:911px;top:247px;" width="12" height="12" viewBox="0 0 12 12"><path d="M1.5 2v8h9" fill="none" stroke="#333"/><path d="M5 5h6" stroke="#888"/></svg>
<svg style="left:911px;top:261px;" width="12" height="12" viewBox="0 0 12 12"><path d="M0 6h4M7 6h5" stroke="#222" stroke-width="1.2"/><path d="M4 4l2 2-2 2M8 4l-2 2 2 2" fill="none" stroke="#222"/></svg>
<svg style="left:911px;top:276px;" width="12" height="12" viewBox="0 0 12 12"><path d="M1.5 12V4l3-2.5H12" fill="none" stroke="#333" stroke-width="1.2"/></svg>
<svg style="left:911px;top:290px;" width="12" height="12" viewBox="0 0 12 12"><path d="M1.5 12V7c0-4 3-5.5 6-5.5H12" fill="none" stroke="#2a5aa0" stroke-width="1.4"/></svg>
<svg style="left:911px;top:304px;" width="12" height="12" viewBox="0 0 12 12"><path d="M2 10l6-6" stroke="#d04020" stroke-width="2"/><path d="M1 3l3 3M8 8l3 3" stroke="#e06020" stroke-width="1.5"/><circle cx="10" cy="2" r="1.5" fill="#d0a020"/></svg>
<svg style="left:911px;top:324px;" width="12" height="12" viewBox="0 0 12 12"><rect x="1.5" y="1.5" width="6" height="6" fill="#e8eef6" stroke="#5a7ab0"/><rect x="4.5" y="4.5" width="6" height="6" fill="#5a88c8" stroke="#2a4a80"/></svg>
<svg style="left:911px;top:339px;" width="12" height="12" viewBox="0 0 12 12"><rect x="4.5" y="1.5" width="6" height="6" fill="#5a88c8" stroke="#2a4a80"/><rect x="1.5" y="4.5" width="6" height="6" fill="#e8eef6" stroke="#5a7ab0"/></svg>
<svg style="left:911px;top:353px;" width="12" height="12" viewBox="0 0 12 12"><rect x="1.5" y="1.5" width="9" height="6" fill="#5a88c8" stroke="#2a4a80"/><path d="M1 10h10" stroke="#6a8ab0" stroke-width="1.2"/></svg>
<svg style="left:911px;top:368px;" width="12" height="12" viewBox="0 0 12 12"><rect x="1.5" y="4.5" width="9" height="6" fill="#5a88c8" stroke="#2a4a80"/><path d="M1 2h10" stroke="#6a8ab0" stroke-width="1.2"/></svg>
<div class="a" style="left:910px;top:322px;width:11px;height:1px;background:#c8c8c4"></div>
<div class="a" style="left:910px;top:324px;width:11px;height:1px;background:#c8c8c4"></div>
<div class="a" style="left:908px;top:388px;width:13px;height:1px;background:#d8d8d4"></div>
<div class="a" style="left:19px;top:68px;width:16px;height:394px;background:#acacac"></div>
<div class="a" style="left:35px;top:68px;width:171px;height:394px;background:#ececec"></div>
<div class="a" style="left:206px;top:68px;width:9px;height:394px;background:#e9e9e9"></div>
<div class="a" style="left:206px;top:68px;width:1px;height:380px;background:#d6d6d6"></div>
<div class="a" style="left:207px;top:68px;width:20px;height:83px;background:#ebebeb;border-radius:0 3px 0 0"></div>
<div class="a" style="left:215px;top:151px;width:12px;height:164px;background:#ececec;border-right:1px solid #c8c8c8;border-bottom:1px solid #d0d0d0;border-radius:0 0 2px 0"></div>
<div class="a" style="left:215px;top:151px;width:1px;height:164px;background:#dadada"></div>
<div class="a" style="left:216px;top:151px;width:10px;height:1px;background:#d4d4d4"></div>
<div class="a" style="left:216px;top:233px;width:10px;height:1px;background:#d4d4d4"></div>
<div class="a" style="left:226px;top:68px;width:1px;height:83px;background:#d0d0d0"></div>
<div class="a" style="left:226px;top:150px;width:2px;height:3px;background:#111"></div>
<div class="a" style="left:226px;top:232px;width:2px;height:3px;background:#111"></div>
<svg style="left:205px;top:451px;" width="12" height="12" viewBox="0 0 12 12"><path d="M11 0V12H0z" fill="#000"/><path d="M10.5 1.5L1.5 10.5" stroke="#808080" stroke-width="1"/></svg>
<div class="a t" style="left:23px;top:70px;font-size:10px;color:#555;font-weight:bold">✕</div>
<svg style="left:21px;top:81px;" width="13" height="13" viewBox="0 0 13 13"><rect x="1" y="1" width="11" height="11" fill="#a8b8c4"/><path d="M2 4l8 4M2 7l7 3.5" stroke="#f4f8fc" stroke-width="1.8"/><path d="M2 11h6" stroke="#f0f4f8" stroke-width="1.4"/></svg>
<div class="a t" style="left:23px;top:427px;font-size:8px;line-height:9px;color:#505050;transform:rotate(-90deg);transform-origin:0 0;">图纸集管理器</div>
<div class="a" style="left:22px;top:433px;width:11px;height:12px;border-top:1px solid #c0c0c0;border-bottom:1px solid #c0c0c0"></div>
<div class="a t" style="left:24px;top:436px;font-size:7px;color:#444;">◂▸</div>
<svg style="left:22px;top:450px;" width="11" height="11" viewBox="0 0 11 11"><rect x=".5" y=".5" width="10" height="10" fill="#c0c0c0" stroke="#777"/><path d="M2 3h7M2 5.5h7M2 8h7" stroke="#666"/></svg>
<div class="a t" style="left:216px;top:126.5px;font-size:8px;line-height:9px;color:#000;transform:rotate(-90deg);transform-origin:0 0;font-weight:bold;-webkit-text-stroke:0.25px #000">图纸列表</div>
<div class="a t" style="left:216px;top:208px;font-size:8px;line-height:9px;color:#000;transform:rotate(-90deg);transform-origin:0 0;-webkit-text-stroke:0.15px #000">图纸视图</div>
<div class="a t" style="left:216px;top:290px;font-size:8px;line-height:9px;color:#000;transform:rotate(-90deg);transform-origin:0 0;-webkit-text-stroke:0.15px #000">模型视图</div>
<div class="a" style="left:40px;top:77px;width:99px;height:15px;background:#fff;border:1px solid #a9a9a9;border-radius:1px;box-shadow:inset 1px 1px 0 #e8e8e8"></div>
<div class="a t" style="left:43px;top:79px;font-size:9px;color:#111;top:79px">打开...</div>
<div class="a" style="left:127px;top:79px;width:10px;height:11px;background:#dcdce4"></div>
<div class="a" style="left:130px;top:83px;width:5px;height:1px;background:#000"></div>
<div class="a" style="left:131px;top:84px;width:3px;height:1px;background:#000"></div>
<div class="a" style="left:132px;top:85px;width:1px;height:1px;background:#000"></div>
<div class="a" style="left:144px;top:77px;width:63px;height:15px;background:#ebebeb;border:1px solid #d0d0d0"></div>
<svg style="left:147px;top:78px;" width="12" height="12" viewBox="0 0 12 12"><circle cx="5" cy="7" r="3.5" fill="none" stroke="#555" stroke-width="1.2"/><circle cx="8" cy="5" r="3" fill="#ddd" stroke="#555"/></svg>
<svg style="left:163px;top:78px;" width="12" height="12" viewBox="0 0 12 12"><circle cx="5" cy="6" r="4" fill="none" stroke="#555" stroke-width="1.2"/><path d="M3 5h5l-2 3z" fill="#555"/></svg>
<div class="a" style="left:178px;top:83px;width:3px;height:1px;background:#999"></div>
<div class="a" style="left:182px;top:79px;width:1px;height:11px;background:#d8d8d8"></div>
<svg style="left:186px;top:78px;" width="12" height="12" viewBox="0 0 12 12"><rect x="2" y="1" width="3" height="3" fill="none" stroke="#666"/><rect x="5" y="4" width="5" height="4" fill="#999" stroke="#555"/><rect x="2" y="8" width="3" height="3" fill="none" stroke="#666"/><path d="M3.5 4v4" stroke="#666"/></svg>
<div class="a" style="left:202px;top:83px;width:3px;height:1px;background:#999"></div>
<div class="a" style="left:40px;top:100px;width:167px;height:135px;background:#efefef;border:1px solid #cfcfcf;border-top:none"></div>
<div class="a" style="left:40px;top:100px;width:167px;height:11px;background:linear-gradient(#c4c4c4,#b6b6b6);border-radius:3px 3px 0 0"></div>
<div class="a t" style="left:46px;top:101px;font-size:9px;color:#111;font-weight:bold">图纸</div>
<div class="a" style="left:182px;top:101px;width:10px;height:9px;background:linear-gradient(#7a9cbc,#4a6e94);border:1px solid #3a5a7a"></div>
<div class="a" style="left:185px;top:103px;width:3px;height:5px;background:#e8f0f8"></div>
<svg style="left:198px;top:101px;" width="9" height="9" viewBox="0 0 9 9"><path d="M1.5 5l3-2.5 3 2.5M1.5 8l3-2.5 3 2.5" fill="none" stroke="#e4e4e4" stroke-width="1"/></svg>
<div class="a t" style="left:121px;top:234px;font-size:8px;color:#999;">⁼</div>
<div class="a" style="left:122px;top:238px;width:4px;height:1px;background:#aaa"></div>
<div class="a" style="left:122px;top:240px;width:4px;height:1px;background:#aaa"></div>
<div class="a" style="left:40px;top:244px;width:167px;height:203px;background:#efefef;border:1px solid #cfcfcf;border-top:none"></div>
<div class="a" style="left:40px;top:244px;width:167px;height:11px;background:linear-gradient(#c4c4c4,#b6b6b6);border-radius:3px 3px 0 0"></div>
<div class="a t" style="left:46px;top:245px;font-size:9px;color:#111;font-weight:bold">详细信息</div>
<div class="a" style="left:171px;top:245px;width:10px;height:9px;background:linear-gradient(#7a9cbc,#4a6e94);border:1px solid #3a5a7a"></div>
<div class="a" style="left:174px;top:247px;width:3px;height:5px;background:#e8f0f8"></div>
<div class="a" style="left:182px;top:245px;width:10px;height:9px;background:linear-gradient(#7a9cbc,#4a6e94);border:1px solid #3a5a7a"></div>
<div class="a" style="left:185px;top:247px;width:3px;height:5px;background:#e8f0f8"></div>
<svg style="left:198px;top:245px;" width="9" height="9" viewBox="0 0 9 9"><path d="M1.5 5l3-2.5 3 2.5M1.5 8l3-2.5 3 2.5" fill="none" stroke="#e4e4e4" stroke-width="1"/></svg>
<div class="a" style="left:44px;top:113px;width:9px;height:9px;background:#f8f8f8;border:1px solid #9a9a9a"></div>
<div class="a t" style="left:47px;top:114px;font-size:7px;color:#333;font-family:'Liberation Serif',serif">i</div>
<div class="a t" style="left:56px;top:113px;font-size:8px;color:#3a1aa8;text-decoration:underline">了解图纸集</div>
<div class="a" style="left:498px;top:68px;width:13px;height:366px;background:#ececec;clip-path:polygon(0 0,100% 0,100% 100%,4px 100%,0 362px)"></div>
<div class="a" style="left:501px;top:104px;width:8px;height:1px;background:#d8d8d8"></div>
<div class="a" style="left:498px;top:103px;width:2px;height:2px;background:#222"></div>
<div class="a" style="left:501px;top:139px;width:8px;height:1px;background:#d8d8d8"></div>
<div class="a" style="left:498px;top:138px;width:2px;height:2px;background:#222"></div>
<div class="a" style="left:501px;top:175px;width:8px;height:1px;background:#d8d8d8"></div>
<div class="a" style="left:498px;top:174px;width:2px;height:2px;background:#222"></div>
<div class="a" style="left:501px;top:211px;width:8px;height:1px;background:#d8d8d8"></div>
<div class="a" style="left:498px;top:210px;width:2px;height:2px;background:#222"></div>
<div class="a" style="left:501px;top:246px;width:8px;height:1px;background:#d8d8d8"></div>
<div class="a" style="left:498px;top:245px;width:2px;height:2px;background:#222"></div>
<div class="a" style="left:501px;top:283px;width:8px;height:1px;background:#d8d8d8"></div>
<div class="a" style="left:498px;top:282px;width:2px;height:2px;background:#222"></div>
<div class="a" style="left:501px;top:319px;width:8px;height:1px;background:#d8d8d8"></div>
<div class="a" style="left:498px;top:318px;width:2px;height:2px;background:#222"></div>
<div class="a" style="left:501px;top:354px;width:8px;height:1px;background:#d8d8d8"></div>
<div class="a" style="left:498px;top:353px;width:2px;height:2px;background:#222"></div>
<div class="a" style="left:501px;top:388px;width:8px;height:1px;background:#d8d8d8"></div>
<div class="a" style="left:498px;top:387px;width:2px;height:2px;background:#222"></div>
<div class="a" style="left:501px;top:424px;width:8px;height:1px;background:#d8d8d8"></div>
<div class="a" style="left:498px;top:423px;width:2px;height:2px;background:#222"></div>
<div class="a" style="left:499px;top:427px;width:11px;height:1px;background:#d4d4d4"></div>
<div class="a" style="left:499px;top:430px;width:11px;height:1px;background:#d4d4d4"></div>
<div class="a" style="left:509px;top:104px;width:1px;height:330px;background:#cfcfcf"></div>
<div class="a" style="left:510px;top:68px;width:97px;height:393px;background:#ececec;clip-path:polygon(0 0,100% 0,100% 100%,9px 100%,0 384px)"></div>
<div class="a" style="left:607px;top:68px;width:15px;height:393px;background:#a9a9a9"></div>
<div class="a" style="left:621px;top:68px;width:1px;height:393px;background:#c4c4c4"></div>
<div class="a" style="left:519px;top:460px;width:88px;height:1px;background:#c8c8c8"></div>
<div class="a t" style="left:609px;top:70px;font-size:10px;color:#555;font-weight:bold">✕</div>
<svg style="left:609px;top:82px;" width="12" height="12" viewBox="0 0 12 12"><rect x="1.5" y="1.5" width="6" height="9" fill="#e8eef8" stroke="#3a5aa0" stroke-width="1.2"/><path d="M3 4h3M3 6h3" stroke="#3a5aa0"/><path d="M7 6l3 3v2h-2z" fill="#222"/></svg>
<div class="a t" style="left:610px;top:425px;font-size:7.4px;line-height:8.4px;color:#3a3a3a;transform:rotate(-90deg);transform-origin:0 0;">TOOL PALETTES - 所有选项板</div>
<div class="a" style="left:609px;top:435px;width:11px;height:11px;border-top:1px solid #c0c0c0;border-bottom:1px solid #c0c0c0"></div>
<div class="a t" style="left:611px;top:437px;font-size:7px;color:#444;">◂▸</div>
<svg style="left:609px;top:449px;" width="11" height="11" viewBox="0 0 11 11"><rect x=".5" y=".5" width="10" height="10" fill="#b8b8b8" stroke="#666"/><path d="M2 3h7M2 5h7M2 7h7" stroke="#666"/></svg>
<div class="a t" style="left:500px;top:96px;font-size:8px;line-height:9px;color:#000;transform:rotate(-90deg);transform-origin:0 0;font-weight:bold;-webkit-text-stroke:0.2px #000">建模</div>
<div class="a t" style="left:500px;top:131px;font-size:8px;line-height:9px;color:#000;transform:rotate(-90deg);transform-origin:0 0;-webkit-text-stroke:0.1px #000">注释</div>
<div class="a t" style="left:500px;top:166.5px;font-size:8px;line-height:9px;color:#000;transform:rotate(-90deg);transform-origin:0 0;-webkit-text-stroke:0.1px #000">建筑</div>
<div class="a t" style="left:500px;top:202px;font-size:8px;line-height:9px;color:#000;transform:rotate(-90deg);transform-origin:0 0;-webkit-text-stroke:0.1px #000">机械</div>
<div class="a t" style="left:500px;top:237.5px;font-size:8px;line-height:9px;color:#000;transform:rotate(-90deg);transform-origin:0 0;-webkit-text-stroke:0.1px #000">电力</div>
<div class="a t" style="left:500px;top:280px;font-size:8px;line-height:9px;color:#000;transform:rotate(-90deg);transform-origin:0 0;-webkit-text-stroke:0.1px #000">土木...</div>
<div class="a t" style="left:500px;top:314px;font-size:8px;line-height:9px;color:#000;transform:rotate(-90deg);transform-origin:0 0;-webkit-text-stroke:0.1px #000">图案...</div>
<div class="a t" style="left:500px;top:350px;font-size:8px;line-height:9px;color:#000;transform:rotate(-90deg);transform-origin:0 0;-webkit-text-stroke:0.1px #000">命令...</div>
<div class="a t" style="left:500px;top:378.5px;font-size:8px;line-height:9px;color:#000;transform:rotate(-90deg);transform-origin:0 0;-webkit-text-stroke:0.1px #000">绘图</div>
<div class="a t" style="left:500px;top:414px;font-size:8px;line-height:9px;color:#000;transform:rotate(-90deg);transform-origin:0 0;-webkit-text-stroke:0.1px #000">修改</div>
<svg style="left:516px;top:80px;" width="20" height="20" viewBox="0 0 20 20"><polyline points="2.00,16.00 2.97,16.71 3.85,17.30 4.57,17.66 5.06,17.71 5.31,17.42 5.32,16.80 5.12,15.90 4.79,14.81 4.41,13.64 4.06,12.54 3.84,11.60 3.82,10.93 4.03,10.59 4.49,10.60 5.18,10.92 6.04,11.48 7.00,12.18 7.98,12.90 8.88,13.52 9.62,13.91 10.15,14.01 10.43,13.77 10.47,13.19 10.30,12.32 9.98,11.25 9.60,10.10 9.25,8.97 9.01,8.01 8.95,7.29 9.13,6.91 9.55,6.86 10.21,7.14 11.05,7.67 12.00,8.36 12.98,9.09 13.90,9.72 14.67,10.16 15.23,10.30 15.55,10.11 15.62,9.58 15.48,8.75 15.18,7.70 14.80,6.55 14.44,5.41 14.18,4.42 14.09,3.66 14.23,3.23 14.62,3.13 15.24,3.37 16.06,3.87 17.01,4.54 17.99,5.27 18.92,5.93 19.72,6.40 20.31,6.59 20.66,6.45 20.77,5.96 20.65,5.17 20.37,4.15 20.00,3.00" fill="none" stroke="#1f4f90" stroke-width="2.2" stroke-linejoin="round"/><polyline points="2.00,16.00 2.97,16.71 3.85,17.30 4.57,17.66 5.06,17.71 5.31,17.42 5.32,16.80 5.12,15.90 4.79,14.81 4.41,13.64 4.06,12.54 3.84,11.60 3.82,10.93 4.03,10.59 4.49,10.60 5.18,10.92 6.04,11.48 7.00,12.18 7.98,12.90 8.88,13.52 9.62,13.91 10.15,14.01 10.43,13.77 10.47,13.19 10.30,12.32 9.98,11.25 9.60,10.10 9.25,8.97 9.01,8.01 8.95,7.29 9.13,6.91 9.55,6.86 10.21,7.14 11.05,7.67 12.00,8.36 12.98,9.09 13.90,9.72 14.67,10.16 15.23,10.30 15.55,10.11 15.62,9.58 15.48,8.75 15.18,7.70 14.80,6.55 14.44,5.41 14.18,4.42 14.09,3.66 14.23,3.23 14.62,3.13 15.24,3.37 16.06,3.87 17.01,4.54 17.99,5.27 18.92,5.93 19.72,6.40 20.31,6.59 20.66,6.45 20.77,5.96 20.65,5.17 20.37,4.15 20.00,3.00" fill="none" stroke="#a8d8fc" stroke-width="0.7" transform="translate(-0.6,-0.6)"/></svg>
<div class="a t" style="left:539px;top:86px;font-size:7.8px;color:#000;-webkit-text-stroke:0.15px #000">圆柱形螺旋</div>
<svg style="left:516px;top:107px;" width="20" height="20" viewBox="0 0 20 20"><path d="M9 10c0-1 1-2 2-1s0 3-2 3-3-2-3-4 2-4 5-4 4 3 4 5-2 6-6 6-6-3-6-6" fill="none" stroke="#a8a8e0" stroke-width="1.1"/><circle cx="9" cy="10" r="8" fill="none" stroke="#c8c8f0" stroke-width=".8"/></svg>
<div class="a t" style="left:539px;top:114px;font-size:7.8px;color:#000;-webkit-text-stroke:0.15px #000">二维螺旋</div>
<svg style="left:516px;top:134px;" width="20" height="20" viewBox="0 0 20 20"><path d="M3 4c0-2 9-3 11-1v14c-2 2-11 1-11-1z" fill="#78a8e0" stroke="#4a78b0" stroke-width=".6"/><ellipse cx="8.5" cy="3.5" rx="5.5" ry="2" fill="#a8cef4"/></svg>
<div class="a t" style="left:539px;top:140px;font-size:7.8px;color:#000;-webkit-text-stroke:0.15px #000">椭圆形圆柱体</div>
<svg style="left:516px;top:161px;" width="20" height="20" viewBox="0 0 20 20"><path d="M6 2h5l5 14c-3 2-11 2-14 0z" fill="#80b0e4" stroke="#5a88c0" stroke-width=".6"/><ellipse cx="8.5" cy="2.5" rx="2.5" ry="1" fill="#c0dcf8"/></svg>
<div class="a t" style="left:539px;top:167px;font-size:7.8px;color:#000;-webkit-text-stroke:0.15px #000">平截面圆锥体</div>
<svg style="left:516px;top:188px;" width="20" height="20" viewBox="0 0 20 20"><path d="M7 2h6l6 8-8 7-9-7z" fill="#88b4e8" stroke="#5a88c0" stroke-width=".6"/><path d="M7 2l-5 8 9 7z" fill="#6898d0"/><path d="M7 2h6l-2 15z" fill="#a8ccf4"/></svg>
<div class="a t" style="left:539px;top:195px;font-size:7.8px;color:#000;-webkit-text-stroke:0.15px #000">平截头棱锥面</div>
<svg style="left:516px;top:216px;" width="20" height="20" viewBox="0 0 20 20"><path d="M3 2v15h15" fill="none" stroke="#2a5a98" stroke-width="1.3"/><path d="M3 17l9-6" stroke="#2a5a98" stroke-width="1.3"/><path d="M1 4l2-3 2 3M16 15l3 2-3 2" fill="none" stroke="#2a5a98"/></svg>
<div class="a t" style="left:539px;top:222px;font-size:7.8px;color:#000;-webkit-text-stroke:0.15px #000">UCS</div>
<svg style="left:516px;top:243px;" width="20" height="20" viewBox="0 0 20 20"><path d="M3 2v15h15" fill="none" stroke="#2a5a98" stroke-width="1.3"/><path d="M1 4l2-3 2 3M16 15l3 2-3 2" fill="none" stroke="#2a5a98"/><path d="M14 8c-3-3-7-1-6 4" fill="none" stroke="#111" stroke-width="2"/><path d="M5 10l3 4 3-3z" fill="#111"/></svg>
<div class="a t" style="left:539px;top:249px;font-size:7.8px;color:#000;-webkit-text-stroke:0.15px #000">上一个 UCS</div>
<svg style="left:516px;top:270px;" width="20" height="20" viewBox="0 0 20 20"><path d="M2 5l8-3v12l-8 3z" fill="#c8c8c8" stroke="#666" stroke-width=".8"/><text x="6" y="13" font-size="9" font-style="italic" fill="#111" text-anchor="middle" font-family="Liberation Sans">0</text><circle cx="14" cy="14" r="3" fill="#fff" stroke="#111" stroke-width="1.2"/><path d="M11 5l3 3" stroke="#111" stroke-width="1.3"/></svg>
<div class="a t" style="left:539px;top:277px;font-size:7.8px;color:#000;-webkit-text-stroke:0.15px #000">三维对齐</div>
<div class="a" style="left:19px;top:494px;width:888px;height:13px;background:#f0f0ee"></div>
<div class="a" style="left:20px;top:494px;width:47px;height:9px;background:#fafafa;border:1px solid #d8d8d8"></div>
<svg style="left:20px;top:494px;" width="48" height="10" viewBox="0 0 48 10"><path d="M4 2v5M9 2l-4 2.5 4 2.5z" fill="#111" stroke="#111" stroke-width=".8"/><path d="M20 2l-4 2.5 4 2.5z" fill="#111"/><path d="M28 2l4 2.5-4 2.5z" fill="#111"/><path d="M39 2l4 2.5-4 2.5zM44 2v5" fill="#111" stroke="#111" stroke-width=".8"/></svg>
<svg style="left:67px;top:494px;" width="84" height="10" viewBox="0 0 84 10"><path d="M2 0h24l-3 9H5z" fill="#111"/><path d="M25.5 0.5h28l-3 8H22.5z" fill="#fff" stroke="#222"/><path d="M53.5 0.5h28l-3 8H50.5z" fill="#fff" stroke="#222"/></svg>
<div class="a t" style="left:76px;top:496px;font-size:7px;color:#fff;-webkit-text-stroke:0.2px #fff">模型</div>
<div class="a t" style="left:96px;top:496px;font-size:7px;color:#000;letter-spacing:-0.2px;-webkit-text-stroke:0.2px #000">布局1</div>
<div class="a t" style="left:124px;top:496px;font-size:7px;color:#000;letter-spacing:-0.2px;-webkit-text-stroke:0.2px #000">布局2</div>
<div class="a" style="left:2px;top:507px;width:919px;height:1px;background:#6a6a6a"></div>
<div class="a" style="left:2px;top:508px;width:919px;height:36px;background:#f2f2f0"></div>
<div class="a" style="left:13px;top:514px;width:908px;height:30px;background:#f6f6f6;border-top:1px solid #6a6a6a;border-left:1px solid #6a6a6a"></div>
<div class="a" style="left:14px;top:529px;width:893px;height:1px;background:#e0e0e0"></div>
<div class="a t" style="left:15px;top:516px;font-size:9px;color:#000;letter-spacing:1.2px;-webkit-text-stroke:0.2px #000">命令: *取消*</div>
<div class="a t" style="left:15px;top:532px;font-size:9px;color:#000;letter-spacing:1.2px;-webkit-text-stroke:0.2px #000">命令:</div>
<svg style="left:910px;top:515px;" width="9" height="14" viewBox="0 0 9 14"><path d="M1 4l3.5-3 3.5 3z" fill="#777"/><path d="M1 10l3.5 3 3.5-3z" fill="#777"/></svg>
<svg style="left:868px;top:530px;" width="40" height="13" viewBox="0 0 40 13"><path d="M5 3v6l-3-3z" fill="#888"/><rect x="9.5" y=".5" width="10" height="11" fill="#f0f0f0" stroke="#b8b8b8"/><path d="M34 3v6l3-3z" fill="#888"/></svg>
<div class="a" style="left:0px;top:544px;width:921px;height:14px;background:#f3f2ee;border-top:1px solid #e4e4e0"></div>
<svg style="left:0px;top:545px;" width="13" height="13" viewBox="0 0 13 13"><rect x="0" y="0" width="13" height="13" fill="#e8e0f0"/><circle cx="6.5" cy="6.5" r="5" fill="#5a3ab0"/><circle cx="8" cy="5" r="3" fill="#f0d020"/><path d="M2 12l3-5" stroke="#c02020" stroke-width="1.5"/></svg>
<div class="a" style="left:13px;top:545px;width:26px;height:13px;background:#f4f4f4;border-right:1px solid #333"></div>
<div class="a t" style="left:14px;top:545px;font-size:11.5px;color:#222;-webkit-text-stroke:0.2px #222">标准</div>
<div class="a" style="left:39px;top:545px;width:13px;height:13px;background:#eee;border-right:1px solid #333"></div>
<svg style="left:41px;top:547px;" width="10" height="10" viewBox="0 0 10 10"><path d="M7 1c-4 1-5 6-1 8 2 0 3-1 3-2-3 1-5-3-2-6z" fill="#111"/></svg>
<div class="a" style="left:52px;top:545px;width:13px;height:13px;background:#eee;border-right:1px solid #333"></div>
<div class="a t" style="left:55px;top:546px;font-size:8px;color:#444;">•)</div>
<div class="a" style="left:65px;top:545px;width:13px;height:13px;background:#ddd;border-right:1px solid #333"></div>
<div class="a t" style="left:66px;top:547px;font-size:7px;color:#888;">≡≡</div>
<div class="a" style="left:79px;top:545px;width:1px;height:13px;background:#aaa"></div>
<div class="a t" style="left:84px;top:548px;font-size:8.5px;color:#333;">,</div>
<div class="a t" style="left:91px;top:548px;font-size:8.5px;color:#222;transform:scaleX(0.85);transform-origin:0 0">0.0000</div>
<div class="a t" style="left:130px;top:548px;font-size:8px;color:#000;-webkit-text-stroke:0.2px #000;">捕捉</div>
<div class="a t" style="left:151px;top:548px;font-size:8px;color:#000;-webkit-text-stroke:0.2px #000;">栅格</div>
<div class="a t" style="left:172px;top:548px;font-size:8px;color:#000;-webkit-text-stroke:0.2px #000;">正交</div>
<div class="a" style="left:189px;top:545px;width:19px;height:13px;background:#fafafa;border-left:1px solid #555;border-top:1px solid #555;border-right:1px solid #fff;border-bottom:1px solid #fff"></div>
<div class="a t" style="left:191px;top:548px;font-size:8px;color:#000;-webkit-text-stroke:0.2px #000;">极轴</div>
<div class="a" style="left:209px;top:545px;width:37px;height:13px;background:#fafafa;border-left:1px solid #555;border-top:1px solid #555;border-right:1px solid #fff;border-bottom:1px solid #fff"></div>
<div class="a t" style="left:211px;top:548px;font-size:8px;color:#000;-webkit-text-stroke:0.2px #000;">对象捕捉</div>
<div class="a" style="left:247px;top:545px;width:36px;height:13px;background:#fafafa;border-left:1px solid #555;border-top:1px solid #555;border-right:1px solid #fff;border-bottom:1px solid #fff"></div>
<div class="a t" style="left:249px;top:548px;font-size:8px;color:#000;-webkit-text-stroke:0.2px #000;">对象追踪</div>
<div class="a" style="left:283px;top:545px;width:19px;height:13px;background:#fafafa;border-left:1px solid #555;border-top:1px solid #555;border-right:1px solid #fff;border-bottom:1px solid #fff"></div>
<div class="a t" style="left:285px;top:548px;font-size:8px;color:#000;-webkit-text-stroke:0.2px #000;font-family:'Liberation Mono',monospace;font-size:6.8px;top:550px;left:285px;letter-spacing:-0.3px;color:#333">DUCS</div>
<div class="a" style="left:303px;top:545px;width:16px;height:13px;background:#fafafa;border-left:1px solid #555;border-top:1px solid #555;border-right:1px solid #fff;border-bottom:1px solid #fff"></div>
<div class="a t" style="left:305px;top:548px;font-size:8px;color:#000;-webkit-text-stroke:0.2px #000;font-family:'Liberation Mono',monospace;font-size:6.8px;top:550px;left:305px;letter-spacing:-0.2px;color:#333">DYN</div>
<div class="a t" style="left:322px;top:548px;font-size:8px;color:#000;-webkit-text-stroke:0.2px #000;">线宽</div>
<div class="a" style="left:341px;top:545px;width:18px;height:13px;background:#fafafa;border-left:1px solid #555;border-top:1px solid #555;border-right:1px solid #fff;border-bottom:1px solid #fff"></div>
<div class="a t" style="left:343px;top:548px;font-size:8px;color:#000;-webkit-text-stroke:0.2px #000;">模型</div>
<svg style="left:863px;top:546px;" width="12" height="12" viewBox="0 0 12 12"><circle cx="6" cy="5" r="4" fill="#5a88c8" stroke="#2a4a80" stroke-width=".8"/><path d="M3 11h6" stroke="#555"/><path d="M6 9v2" stroke="#555"/></svg>
<svg style="left:876px;top:546px;" width="12" height="12" viewBox="0 0 12 12"><rect x="1" y="5" width="8" height="6" fill="#c8b020" stroke="#706010" stroke-width=".8"/><path d="M6 5V2.5c0-2 4-2 4 0V4" fill="none" stroke="#706010" stroke-width="1.3"/></svg>
<svg style="left:892px;top:551px;" width="6" height="4" viewBox="0 0 6 4"><path d="M0 0h6l-3 3z" fill="#111"/></svg>
<div class="a" style="left:903px;top:546px;width:11px;height:11px;background:linear-gradient(90deg,#5a88c0,#a8c8e8 40%,#5a88c0);border:1px solid #2a4a80"></div>
<div class="a" style="left:0px;top:558px;width:921px;height:3px;background:#1a54a0"></div>
</div></body></html>
